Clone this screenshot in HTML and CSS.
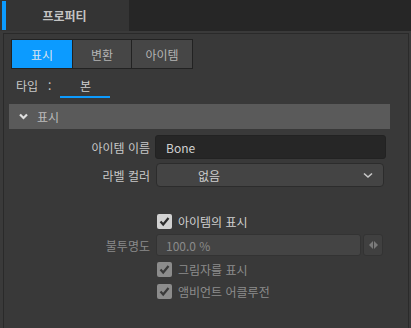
FILE: index.html
```html
<!DOCTYPE html>
<html lang="ko">
  <head>
    <meta charset="UTF-8" />
    <title>프로퍼티</title>
    <link rel="stylesheet" href="styles.css">
  </head>
  <body>
    <div class="tabbar">
      <div class="tab">
        <span class="tab-mark"></span>
        <span class="tab-label">프로퍼티</span>
      </div>
    </div>
    <div class="panel">
      <div class="segments">
        <button class="seg active">표시</button>
        <button class="seg">변환</button>
        <button class="seg">아이템</button>
      </div>
      <div class="type-row">
        <span class="type-label">타입</span>
        <span class="type-colon">:</span>
        <span class="type-value">본</span>
      </div>
      <div class="section-head">
        <svg class="chev" width="9" height="7" viewBox="0 0 9 7">
          <path d="M1 1.5 L4.5 5 L8 1.5" fill="none" stroke="#e0e0e0" stroke-width="2.2" />
        </svg>
        <span>표시</span>
      </div>
      <div class="form">
        <label class="lbl">아이템 이름</label>
        <div class="field text-field">Bone</div>

        <label class="lbl">라벨 컬러</label>
        <div class="field select-field">
          <span class="select-text">없음</span>
          <svg width="10" height="7" viewBox="0 0 10 7">
            <path d="M1 1.5 L5 5 L9 1.5" fill="none" stroke="#c8c8c8" stroke-width="1.6" />
          </svg>
        </div>

        <span></span>
        <div class="check-row first">
          <span class="box">
            <svg width="15" height="15" viewBox="0 0 15 15">
              <path d="M3.5 7.5 L6.2 10.5 L11.5 4" fill="none" stroke="#2e2e2e" stroke-width="2.2" />
            </svg>
          </span>
          <span class="check-text">아이템의 표시</span>
        </div>

        <label class="lbl dim">불투명도</label>
        <div class="num-row">
          <div class="field num-field">100.0 %</div>
          <div class="spin">
            <span class="tri left"></span>
            <span class="tri right"></span>
          </div>
        </div>

        <span></span>
        <div class="check-row off">
          <span class="box">
            <svg width="15" height="15" viewBox="0 0 15 15">
              <path d="M3.5 7.5 L6.2 10.5 L11.5 4" fill="none" stroke="#3a3a3a" stroke-width="2.2" />
            </svg>
          </span>
          <span class="check-text">그림자를 표시</span>
        </div>

        <span></span>
        <div class="check-row off">
          <span class="box">
            <svg width="15" height="15" viewBox="0 0 15 15">
              <path d="M3.5 7.5 L6.2 10.5 L11.5 4" fill="none" stroke="#3a3a3a" stroke-width="2.2" />
            </svg>
          </span>
          <span class="check-text">앰비언트 어클루전</span>
        </div>
      </div>
    </div>
  </body>
</html>
```

FILE: styles.css
```css
body {
  margin: 0;
  background-color: #3a3a3a;
  font-family: "Noto Sans CJK KR", "Noto Sans", sans-serif;
  font-size: 12px;
  color: #c8c8c8;
  height: 328px;
  overflow: hidden;
}
.tabbar {
  height: 31px;
  background-color: #262626;
  display: flex;
}
.tab {
  width: 129px;
  background-color: #343434;
  display: flex;
}
.tab-mark {
  width: 4px;
  margin: 1px 0 1px 2px;
  background-color: #0c9bff;
}
.tab-label {
  flex: 1;
  text-align: center;
  line-height: 31px;
  font-weight: bold;
  color: #c4c4c4;
  padding-right: 6px;
}
.panel {
  margin: 2px 2px 0 3px;
  border: 1px solid #2a2a2a;
  border-bottom: none;
  background-color: #393939;
  height: 300px;
}
.segments {
  display: grid;
  grid-template-columns: 60px 58px 60px;
  gap: 1px;
  padding: 1px;
  background-color: #222;
  width: 180px;
  margin: 5px 0 0 7px;
}
.seg {
  height: 28px;
  border: none;
  background-color: #464646;
  color: #b4b4b4;
  font-family: inherit;
  font-size: 12px;
  padding: 0;
}
.seg.active {
  background-color: #0c9bff;
  color: #d8e4f0;
}
.type-row {
  display: flex;
  align-items: center;
  height: 26px;
  margin-top: 3px;
  position: relative;
}
.type-label {
  margin-left: 12px;
}
.type-colon {
  margin-left: 10px;
}
.type-value {
  margin-left: 9px;
  width: 50px;
  text-align: center;
  color: #d0d0d0;
  border-bottom: 2px solid #0c9bff;
  line-height: 20px;
  margin-top: 4px;
}
.section-head {
  margin: 6px 0 0 5px;
  width: 381px;
  height: 25px;
  background-color: #5a5a5a;
  display: flex;
  align-items: center;
  color: #bcbcbc;
}
.chev {
  margin-left: 10px;
  margin-right: 9px;
}
.form {
  display: grid;
  grid-template-columns: 146px 230px;
  column-gap: 5px;
  row-gap: 4px;
  margin-top: 6px;
  align-items: center;
}
.lbl {
  text-align: right;
  color: #c8c8c8;
}
.lbl.dim {
  color: #8a8a8a;
}
.field {
  height: 24px;
  box-sizing: border-box;
  border-radius: 3px;
  display: flex;
  align-items: center;
}
.text-field {
  background-color: #262626;
  border: 1px solid #222;
  padding-left: 10px;
  width: 231px;
  color: #d0d0d0;
}
.select-field {
  background-color: #444;
  border: 1px solid #2c2c2c;
  border-radius: 4px;
  width: 228px;
  margin-left: 1px;
  padding: 0 10px 0 0;
}
.select-text {
  flex: 1;
  padding-left: 41px;
  color: #cfcfcf;
}
.check-row {
  display: flex;
  align-items: center;
  gap: 6px;
  height: 18px;
  margin-left: 2px;
}
.check-row.first {
  margin-top: 21px;
}
.box {
  width: 15px;
  height: 15px;
  border-radius: 2px;
  background-color: #d2d2d2;
  display: block;
}
.box svg {
  display: block;
}
.check-row.off .box {
  background-color: #8c8c8c;
}
.check-row.off .check-text {
  color: #8c8c8c;
}
.check-text {
  color: #d0d0d0;
}
.num-row {
  display: flex;
  gap: 2px;
  margin-left: 1px;
}
.num-field {
  width: 205px;
  height: 22px;
  background-color: #444;
  border: 1px solid #333;
  padding-left: 9px;
  color: #8a8a8a;
}
.spin {
  width: 20px;
  height: 22px;
  box-sizing: border-box;
  background-color: #404040;
  border: 1px solid #333;
  border-radius: 3px;
  display: flex;
  align-items: center;
  justify-content: center;
  gap: 1px;
}
.tri {
  width: 0;
  height: 0;
  border-top: 4px solid transparent;
  border-bottom: 4px solid transparent;
}
.tri.left {
  border-right: 4px solid #7a7a7a;
}
.tri.right {
  border-left: 4px solid #7a7a7a;
}
```
